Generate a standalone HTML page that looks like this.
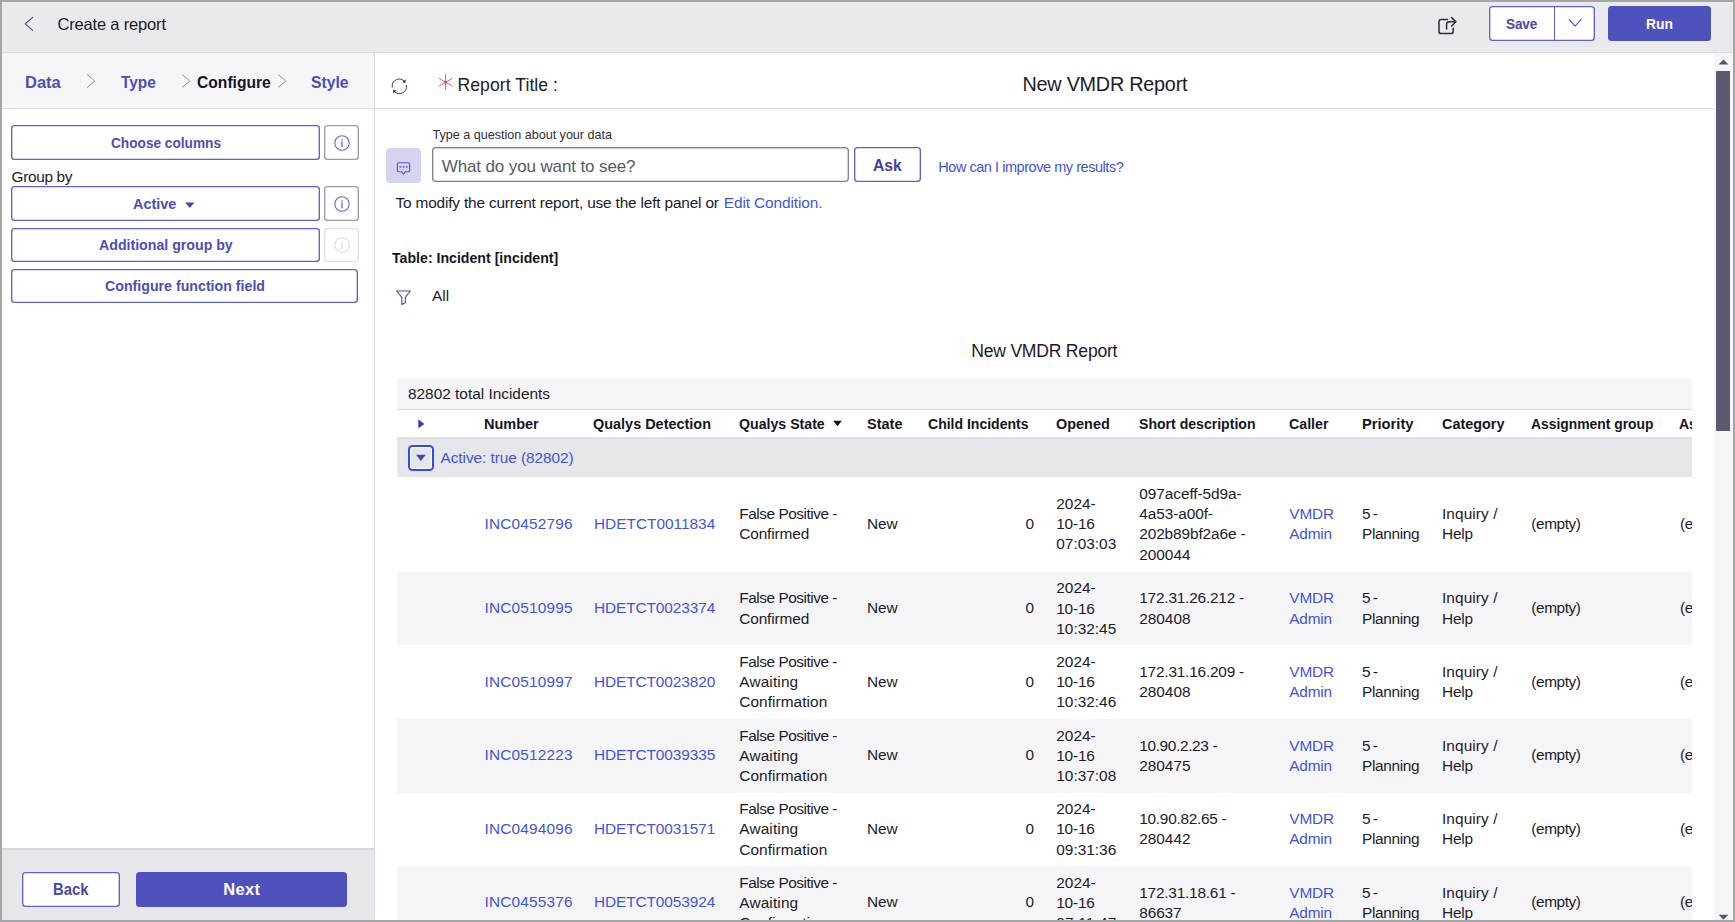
<!DOCTYPE html>
<html lang="en">
<head>
<meta charset="utf-8">
<title>Create a report</title>
<style>
*,*::before,*::after{box-sizing:border-box}
*{margin:0;padding:0}
html,body{width:1735px;height:922px;overflow:hidden;background:#fff}
body{font-family:"Liberation Sans",sans-serif;font-size:15.4px;color:#1b1b29}
#frame{position:absolute;left:0;top:0;width:1735px;height:922px;overflow:hidden;background:#fff}
#frame::after{content:"";position:absolute;left:0;top:0;width:1735px;height:922px;border:2px solid #a6a6a6;z-index:50}
header#top,aside#left,main#main,nav#tabs,footer#lfoot{position:absolute;left:0;top:0;width:1735px;height:922px}
header#top,aside#left,nav#tabs,footer#lfoot{pointer-events:none}
header#top::before{content:"";position:absolute;left:0;top:0;width:1735px;height:53px;background:#e9eaee;border-bottom:1px solid #d9dbe1}
aside#left::before{content:"";position:absolute;left:0;top:53px;width:374px;height:56px;background:#f6f6f8;border-bottom:1px solid #dddde2}
aside#left::after{content:"";position:absolute;left:374px;top:53px;width:1px;height:869px;background:#d9d9de}
footer#lfoot::before{content:"";position:absolute;left:0;top:848px;width:374px;height:74px;background:#e6e7eb;border-top:2px solid #d6d8df}
.t{position:absolute;white-space:pre;font-weight:400;font-style:normal;text-decoration:none;display:block}
.ic{position:absolute;display:block;overflow:visible}
.btn{position:absolute;border-radius:3.5px}
.btn.sec{background:#fff;box-shadow:inset 0 0 0 1.35px #5f62c6}
.btn.pri{background:#4f52bd}
#titlebar{position:absolute;left:375px;top:108px;width:1338.5px;height:1px;background:#dcdde2}
#qinput{position:absolute;left:432px;top:147.4px;width:416.8px;height:34.6px;border-radius:4px;background:#fff;box-shadow:inset 0 0 0 1.35px #7d8290,inset 0 2.5px 1.5px rgba(0,0,0,.07)}
#tbl{position:absolute;top:377.5px;height:545px;overflow:hidden}
.hd{border-top:1px solid #dcdde2;border-bottom:2px solid #dcdee3;overflow:hidden}
.vr{position:absolute;width:1px;background:#5d60c6;display:block}
.lk{color:#3f55dc;text-decoration:none}
.c.s1{top:-0.7px}
.row{position:absolute;left:0;width:100%}
.dr{overflow:hidden}
.c{position:absolute;top:0;height:100%;display:flex;flex-direction:column;justify-content:center;line-height:20.2px;white-space:pre;font-size:15.4px}
#sb{position:absolute;left:1714px;top:53px;width:19px;height:869px;background:#f5f5f7}
#thumb{position:absolute;left:1.9px;top:18.2px;width:14px;height:360px;background:#5c5a6e}

</style>
</head>
<body>
<div id="frame">
<header id="top">
<svg class="ic" style="left:22.00px;top:15.00px" width="14" height="18" viewBox="0 0 14 18"><path d="M10.6 2.4 L3.2 8.9 L10.6 15.4" fill="none" stroke="#47436e" stroke-width="1.05" stroke-linecap="round" stroke-linejoin="round"/></svg>
<h1 class="t" style="left:57.50px;top:13.78px;font-size:16.5px;line-height:20px;color:#1b1b29;letter-spacing:-0.177px;">Create a report</h1>
<svg class="ic" style="left:1436.00px;top:14.00px" width="24" height="24" viewBox="0 0 24 24"><g fill="none" stroke="#2b2d3a" stroke-width="1.5" stroke-linecap="round" stroke-linejoin="round"><path d="M11.5 5.4 H5.2 Q3.0 5.4 3.0 7.6 V17.4 Q3.0 19.6 5.2 19.6 H15.0 Q17.2 19.6 17.2 17.4 V14.2"/><path d="M10.6 15.0 V10.4 Q10.6 7.8 13.2 7.8 H19.6"/><path d="M15.6 3.6 L19.9 7.8 L15.6 12.0"/></g></svg>
<div role="button" class="btn sec" style="left:1488.6px;top:6.3px;width:106.3px;height:34.5px;"><b class="t" style="left:17.90px;top:7.56px;font-size:15.4px;line-height:20px;color:#4548a8;font-weight:700;transform:scaleX(0.8800);transform-origin:0 50%;letter-spacing:-0.166px;">Save</b><i class="vr" style="left:65.4px;top:0.7px;height:33px"></i><svg class="ic" style="left:77.40px;top:9.70px" width="18" height="14" viewBox="0 0 18 14"><path d="M3.2 3.6 L9.1 10.2 L15.0 3.6" fill="none" stroke="#4f52bd" stroke-width="1.1" stroke-linecap="round" stroke-linejoin="round"/></svg></div>
<div role="button" class="btn pri" style="left:1608.1px;top:6.3px;width:103.2px;height:34.5px;"><b class="t" style="left:38.30px;top:7.56px;font-size:15.4px;line-height:20px;color:#fff;font-weight:700;transform:scaleX(0.9023);transform-origin:0 50%;">Run</b></div>
</header>
<aside id="left">
<nav id="tabs">
<a class="t" style="left:25.00px;top:71.58px;font-size:16.5px;line-height:20px;color:#4b4eb8;font-weight:700;letter-spacing:-0.005px;">Data</a>
<svg class="ic" style="left:84.60px;top:72.00px" width="12" height="18" viewBox="0 0 12 18"><path d="M2.3 2.6 L9.8 9.0 L2.3 15.4" fill="none" stroke="#8f95ad" stroke-width="1.0" stroke-linecap="round" stroke-linejoin="round"/></svg>
<a class="t" style="left:121.40px;top:71.58px;font-size:16.5px;line-height:20px;color:#4b4eb8;font-weight:700;transform:scaleX(0.9304);transform-origin:0 50%;">Type</a>
<svg class="ic" style="left:180.40px;top:72.00px" width="12" height="18" viewBox="0 0 12 18"><path d="M2.3 2.6 L9.8 9.0 L2.3 15.4" fill="none" stroke="#8f95ad" stroke-width="1.0" stroke-linecap="round" stroke-linejoin="round"/></svg>
<a class="t" style="left:197.30px;top:71.58px;font-size:16.5px;line-height:20px;color:#15151f;font-weight:700;transform:scaleX(0.9471);transform-origin:0 50%;">Configure</a>
<svg class="ic" style="left:276.10px;top:72.00px" width="12" height="18" viewBox="0 0 12 18"><path d="M2.3 2.6 L9.8 9.0 L2.3 15.4" fill="none" stroke="#8f95ad" stroke-width="1.0" stroke-linecap="round" stroke-linejoin="round"/></svg>
<a class="t" style="left:310.75px;top:71.58px;font-size:16.5px;line-height:20px;color:#4b4eb8;font-weight:700;transform:scaleX(0.9509);transform-origin:0 50%;">Style</a>
</nav>
<div role="button" class="btn sec" style="left:11px;top:125.4px;width:308.7px;height:34.6px;"><b class="t" style="left:99.50px;top:7.86px;font-size:15.4px;line-height:20px;color:#4b4eb8;font-weight:700;transform:scaleX(0.8871);transform-origin:0 50%;">Choose columns</b></div>
<div role="button" aria-label="More information" class="btn " style="left:324.1px;top:125.4px;width:34.9px;height:34.7px;box-shadow:inset 0 0 0 1.35px #989dab;background:#fff"><svg class="ic" style="left:8.50px;top:8.40px" width="18" height="18" viewBox="0 0 18 18"><circle cx="9" cy="9" r="7.2" fill="none" stroke="#6760c8" stroke-width="1.1"/><rect x="8.35" y="7.6" width="1.3" height="5.6" fill="#6760c8"/><rect x="8.3" y="5.2" width="1.4" height="1.4" fill="#6760c8"/></svg></div>
<label class="t" style="left:11.50px;top:166.66px;font-size:15.4px;line-height:20px;color:#1b1b29;letter-spacing:-0.33px;">Group by</label>
<div role="button" class="btn sec" style="left:11px;top:186.2px;width:308.7px;height:34.6px;"><b class="t" style="left:122.25px;top:7.86px;font-size:15.4px;line-height:20px;color:#4b4eb8;font-weight:700;transform:scaleX(0.9361);transform-origin:0 50%;">Active</b><svg class="ic" style="left:173.00px;top:14.80px" width="12" height="9" viewBox="0 0 12 9"><path d="M1.1 1.6 H10.5 L5.8 7.1 Z" fill="#4548b8"/></svg></div>
<div role="button" aria-label="More information" class="btn " style="left:324.1px;top:186.2px;width:34.9px;height:34.7px;box-shadow:inset 0 0 0 1.35px #989dab;background:#fff"><svg class="ic" style="left:8.50px;top:8.40px" width="18" height="18" viewBox="0 0 18 18"><circle cx="9" cy="9" r="7.2" fill="none" stroke="#6760c8" stroke-width="1.1"/><rect x="8.35" y="7.6" width="1.3" height="5.6" fill="#6760c8"/><rect x="8.3" y="5.2" width="1.4" height="1.4" fill="#6760c8"/></svg></div>
<div role="button" class="btn sec" style="left:11px;top:227.5px;width:308.7px;height:34.6px;"><b class="t" style="left:87.75px;top:7.76px;font-size:15.4px;line-height:20px;color:#4b4eb8;font-weight:700;transform:scaleX(0.9202);transform-origin:0 50%;">Additional group by</b></div>
<div role="button" aria-label="More information" class="btn " style="left:324.1px;top:227.5px;width:34.9px;height:34.7px;box-shadow:inset 0 0 0 1.35px #dfe0e8;background:#fff"><svg class="ic" style="left:8.50px;top:8.40px" width="18" height="18" viewBox="0 0 18 18"><circle cx="9" cy="9" r="7.2" fill="none" stroke="#d9d8f2" stroke-width="1.1"/><rect x="8.35" y="7.6" width="1.3" height="5.6" fill="#d9d8f2"/><rect x="8.3" y="5.2" width="1.4" height="1.4" fill="#d9d8f2"/></svg></div>
<div role="button" class="btn sec" style="left:11px;top:268.7px;width:346.8px;height:34.6px;"><b class="t" style="left:93.50px;top:7.76px;font-size:15.4px;line-height:20px;color:#4b4eb8;font-weight:700;transform:scaleX(0.9219);transform-origin:0 50%;">Configure function field</b></div>
<footer id="lfoot">
<div role="button" class="btn sec" style="left:22px;top:872px;width:98px;height:35px;"><b class="t" style="left:31.25px;top:7.28px;font-size:16.5px;line-height:20px;color:#4548a8;font-weight:700;transform:scaleX(0.8998);transform-origin:0 50%;">Back</b></div>
<div role="button" class="btn pri" style="left:136.25px;top:872px;width:210.5px;height:35px;"><b class="t" style="left:87.00px;top:7.28px;font-size:16.5px;line-height:20px;color:#fff;font-weight:700;letter-spacing:0.328px;">Next</b></div>
</footer>
</aside>
<main id="main">
<div id="titlebar"></div>
<svg class="ic" style="left:389.00px;top:76.00px" width="21" height="21" viewBox="0 0 21 21"><g fill="none" stroke="#3d3990" stroke-width="1.0" stroke-linecap="round"><path d="M3.2 11.2 A7.1 7.1 0 0 1 15.4 5.3"/><path d="M17.5 9.5 A7.1 7.1 0 0 1 5.3 15.4"/></g><path d="M16.6 3.3 L16.5 6.9 L13.2 6.2 Z" fill="#2c2876"/><path d="M4.1 17.4 L4.2 13.8 L7.5 14.5 Z" fill="#2c2876"/></svg>
<svg class="ic" style="left:436.00px;top:72.00px" width="20" height="20" viewBox="0 0 20 20"><g stroke="#ef4a66" stroke-width="0.95" stroke-linecap="round"><path d="M9.6 2.7 V17.8"/><path d="M3.0 6.4 L16.3 14.1"/><path d="M16.3 6.4 L3.0 14.1"/></g><circle cx="9.6" cy="10.2" r="1.1" fill="#e5203f"/></svg>
<label class="t" style="left:457.50px;top:74.65px;font-size:17.6px;line-height:20px;color:#1b1b29;letter-spacing:0.058px;">Report Title :</label>
<h2 class="t" style="left:1022.50px;top:73.89px;font-size:19.8px;line-height:20px;color:#1b1b29;letter-spacing:-0.228px;">New VMDR Report</h2>
<label class="t" style="left:432.50px;top:124.83px;font-size:12.6px;line-height:20px;color:#2e2e3a;letter-spacing:-0.015px;">Type a question about your data</label>
<div role="button" aria-label="Ask a question" class="btn " style="left:386.2px;top:148.1px;width:34.5px;height:34.8px;background:#d4d4ee;border-radius:4px"><svg class="ic" style="left:7.80px;top:10.90px" width="19" height="19" viewBox="0 0 19 19"><path d="M4.7 3.7 H14.3 Q15.6 3.7 15.6 5.0 V11.4 Q15.6 12.7 14.3 12.7 H11.3 L9.5 15.1 L7.7 12.7 H4.7 Q3.4 12.7 3.4 11.4 V5.0 Q3.4 3.7 4.7 3.7 Z" fill="none" stroke="#5a55c6" stroke-width="1.15" stroke-linejoin="round"/><g fill="#5a55c6"><rect x="5.5" y="7.1" width="1.6" height="1.6"/><rect x="8.7" y="7.1" width="1.6" height="1.6"/><rect x="11.9" y="7.1" width="1.6" height="1.6"/></g></svg></div>
<div id="qinput"><span class="t" style="left:9.75px;top:9.71px;font-size:17px;line-height:20px;color:#565a66;letter-spacing:-0.122px;">What do you want to see?</span></div>
<div role="button" class="btn sec" style="left:854.2px;top:147px;width:66.6px;height:34.8px;"><b class="t" style="left:18.80px;top:9.31px;font-size:17px;line-height:20px;color:#3f4296;font-weight:700;transform:scaleX(0.9218);transform-origin:0 50%;">Ask</b></div>
<a class="t" style="left:938.25px;top:157.38px;font-size:14.5px;line-height:20px;color:#3f55dc;letter-spacing:-0.455px;">How can I improve my results?</a>
<span class="t" style="left:395.50px;top:192.91px;font-size:15.4px;line-height:20px;color:#1b1b29;letter-spacing:-0.169px;">To modify the current report, use the left panel or</span>
<a class="t" style="left:723.75px;top:192.91px;font-size:15.4px;line-height:20px;color:#3f55dc;letter-spacing:-0.097px;">Edit Condition.</a>
<b class="t" style="left:392.00px;top:247.91px;font-size:15.4px;line-height:20px;color:#15151f;font-weight:700;transform:scaleX(0.9186);transform-origin:0 50%;">Table: Incident [incident]</b>
<svg class="ic" style="left:394.00px;top:288.00px" width="20" height="19" viewBox="0 0 20 19"><path d="M2.6 3.0 H16.3 L11.4 9.3 V14.7 L7.8 16.4 V9.3 Z" fill="none" stroke="#54499f" stroke-width="1.1" stroke-linejoin="round"/></svg>
<span class="t" style="left:432.10px;top:285.96px;font-size:15.4px;line-height:20px;color:#1b1b29;">All</span>
<h3 class="t" style="left:971.25px;top:340.90px;font-size:17.6px;line-height:20px;color:#1b1b29;letter-spacing:-0.239px;">New VMDR Report</h3>
<section id="tbl" style="left:397px;width:1294.6px">
<div class="row" style="top:0;height:31.2px;background:#f5f5f7"><span class="t" style="left:11.00px;top:6.16px;font-size:15.4px;line-height:20px;color:#1b1b29;letter-spacing:-0.002px;">82802 total Incidents</span></div>
<div class="row hd" style="top:31.2px;height:30.1px">
<svg class="ic" style="left:19.00px;top:7.30px" width="10" height="13" viewBox="0 0 10 13"><path d="M2.3 2.3 L8.4 6.9 L2.3 11.5 Z" fill="#3b3fb4"/></svg>
<b class="t" style="left:87.25px;top:4.16px;font-size:15.4px;line-height:20px;color:#15151f;font-weight:700;transform:scaleX(0.9414);transform-origin:0 50%;">Number</b>
<b class="t" style="left:196.25px;top:4.16px;font-size:15.4px;line-height:20px;color:#15151f;font-weight:700;transform:scaleX(0.9385);transform-origin:0 50%;">Qualys Detection</b>
<b class="t" style="left:342.25px;top:4.16px;font-size:15.4px;line-height:20px;color:#15151f;font-weight:700;transform:scaleX(0.9196);transform-origin:0 50%;">Qualys State</b>
<svg class="ic" style="left:435.00px;top:9.30px" width="11" height="9" viewBox="0 0 11 9"><path d="M1.2 1.7 H9.8 L5.5 7.3 Z" fill="#15151f"/></svg>
<b class="t" style="left:470.00px;top:4.16px;font-size:15.4px;line-height:20px;color:#15151f;font-weight:700;transform:scaleX(0.9431);transform-origin:0 50%;">State</b>
<b class="t" style="left:531.25px;top:4.16px;font-size:15.4px;line-height:20px;color:#15151f;font-weight:700;transform:scaleX(0.9110);transform-origin:0 50%;">Child Incidents</b>
<b class="t" style="left:659.25px;top:4.16px;font-size:15.4px;line-height:20px;color:#15151f;font-weight:700;transform:scaleX(0.9381);transform-origin:0 50%;">Opened</b>
<b class="t" style="left:742.25px;top:4.16px;font-size:15.4px;line-height:20px;color:#15151f;font-weight:700;transform:scaleX(0.9143);transform-origin:0 50%;">Short description</b>
<b class="t" style="left:892.25px;top:4.16px;font-size:15.4px;line-height:20px;color:#15151f;font-weight:700;transform:scaleX(0.9233);transform-origin:0 50%;">Caller</b>
<b class="t" style="left:964.75px;top:4.16px;font-size:15.4px;line-height:20px;color:#15151f;font-weight:700;transform:scaleX(0.9556);transform-origin:0 50%;">Priority</b>
<b class="t" style="left:1045.00px;top:4.16px;font-size:15.4px;line-height:20px;color:#15151f;font-weight:700;transform:scaleX(0.9368);transform-origin:0 50%;">Category</b>
<b class="t" style="left:1134.25px;top:4.16px;font-size:15.4px;line-height:20px;color:#15151f;font-weight:700;transform:scaleX(0.9009);transform-origin:0 50%;">Assignment group</b>
<b class="t" style="left:1282.30px;top:4.16px;font-size:15.4px;line-height:20px;color:#15151f;font-weight:700;transform:scaleX(0.9083);transform-origin:0 50%;">Assigned to</b>
</div>
<div class="row" style="top:61.3px;height:38px;background:#e5e6ea">
<div role="button" aria-label="Collapse group" class="btn " style="left:11px;top:6.099999999999966px;width:26px;height:26px;box-shadow:inset 0 0 0 2px #334be6,inset 0 0 0 3px #fbfbfd;border-radius:4.5px;background:#e5e6ea"><svg class="ic" style="left:7.00px;top:8.50px" width="12" height="9" viewBox="0 0 12 9"><path d="M1.0 1.7 H10.8 L5.9 8.1 Z" fill="#4644bc"/></svg></div>
<a class="t" style="left:43.50px;top:8.86px;font-size:15.4px;line-height:20px;color:#3f55dc;letter-spacing:-0.056px;">Active: true (82802)</a>
</div>
<div class="row dr" style="top:99.3px;height:95px">
<a class="c lk s1" style="left:87.5px"><div style="letter-spacing:0.174px">INC0452796</div></a>
<a class="c lk s1" style="left:197px"><div style="letter-spacing:0.005px">HDETCT0011834</div></a>
<div class="c" style="left:342.25px"><div style="letter-spacing:-0.464px">False Positive -</div><div style="letter-spacing:-0.125px">Confirmed</div></div>
<div class="c s1" style="left:470px"><div style="letter-spacing:-0.148px">New</div></div>
<div class="c s1" style="left:628.4px"><div>0</div></div>
<div class="c" style="left:659.25px"><div style="letter-spacing:0.031px">2024-</div><div style="letter-spacing:-0.194px">10-16</div><div style="letter-spacing:0.011px">07:03:03</div></div>
<div class="c" style="left:742.25px"><div style="letter-spacing:-0.059px">097aceff-5d9a-</div><div style="letter-spacing:-0.078px">4a53-a00f-</div><div style="letter-spacing:-0.103px">202b89bf2a6e -</div><div style="letter-spacing:-0.022px">200044</div></div>
<a class="c lk" style="left:892.25px"><div style="letter-spacing:-0.109px">VMDR</div><div style="letter-spacing:-0.219px">Admin</div></a>
<div class="c" style="left:965px"><div style="letter-spacing:-0.984px">5 -</div><div style="letter-spacing:-0.344px">Planning</div></div>
<div class="c" style="left:1045px"><div style="letter-spacing:0.094px">Inquiry /</div><div style="letter-spacing:-0.219px">Help</div></div>
<div class="c s1" style="left:1134.25px"><div style="letter-spacing:-0.404px">(empty)</div></div>
<div class="c s1" style="left:1283px"><div style="letter-spacing:-0.404px">(empty)</div></div>
</div>
<div class="row dr" style="top:194.3px;height:73.7px;background:#f5f5f7">
<a class="c lk s1" style="left:87.5px"><div style="letter-spacing:0.174px">INC0510995</div></a>
<a class="c lk s1" style="left:197px"><div style="letter-spacing:-0.091px">HDETCT0023374</div></a>
<div class="c" style="left:342.25px"><div style="letter-spacing:-0.464px">False Positive -</div><div style="letter-spacing:-0.125px">Confirmed</div></div>
<div class="c s1" style="left:470px"><div style="letter-spacing:-0.148px">New</div></div>
<div class="c s1" style="left:628.4px"><div>0</div></div>
<div class="c" style="left:659.25px"><div style="letter-spacing:0.031px">2024-</div><div style="letter-spacing:-0.194px">10-16</div><div style="letter-spacing:0.011px">10:32:45</div></div>
<div class="c" style="left:742.25px"><div style="letter-spacing:-0.202px">172.31.26.212 -</div><div style="letter-spacing:-0.022px">280408</div></div>
<a class="c lk" style="left:892.25px"><div style="letter-spacing:-0.109px">VMDR</div><div style="letter-spacing:-0.219px">Admin</div></a>
<div class="c" style="left:965px"><div style="letter-spacing:-0.984px">5 -</div><div style="letter-spacing:-0.344px">Planning</div></div>
<div class="c" style="left:1045px"><div style="letter-spacing:0.094px">Inquiry /</div><div style="letter-spacing:-0.219px">Help</div></div>
<div class="c s1" style="left:1134.25px"><div style="letter-spacing:-0.404px">(empty)</div></div>
<div class="c s1" style="left:1283px"><div style="letter-spacing:-0.404px">(empty)</div></div>
</div>
<div class="row dr" style="top:268.0px;height:73.6px">
<a class="c lk s1" style="left:87.5px"><div style="letter-spacing:0.174px">INC0510997</div></a>
<a class="c lk s1" style="left:197px"><div style="letter-spacing:-0.091px">HDETCT0023820</div></a>
<div class="c" style="left:342.25px"><div style="letter-spacing:-0.464px">False Positive -</div><div style="letter-spacing:0.142px">Awaiting</div><div style="letter-spacing:0.068px">Confirmation</div></div>
<div class="c s1" style="left:470px"><div style="letter-spacing:-0.148px">New</div></div>
<div class="c s1" style="left:628.4px"><div>0</div></div>
<div class="c" style="left:659.25px"><div style="letter-spacing:0.031px">2024-</div><div style="letter-spacing:-0.194px">10-16</div><div style="letter-spacing:0.011px">10:32:46</div></div>
<div class="c" style="left:742.25px"><div style="letter-spacing:-0.202px">172.31.16.209 -</div><div style="letter-spacing:-0.022px">280408</div></div>
<a class="c lk" style="left:892.25px"><div style="letter-spacing:-0.109px">VMDR</div><div style="letter-spacing:-0.219px">Admin</div></a>
<div class="c" style="left:965px"><div style="letter-spacing:-0.984px">5 -</div><div style="letter-spacing:-0.344px">Planning</div></div>
<div class="c" style="left:1045px"><div style="letter-spacing:0.094px">Inquiry /</div><div style="letter-spacing:-0.219px">Help</div></div>
<div class="c s1" style="left:1134.25px"><div style="letter-spacing:-0.404px">(empty)</div></div>
<div class="c s1" style="left:1283px"><div style="letter-spacing:-0.404px">(empty)</div></div>
</div>
<div class="row dr" style="top:341.6px;height:73.6px;background:#f5f5f7">
<a class="c lk s1" style="left:87.5px"><div style="letter-spacing:0.174px">INC0512223</div></a>
<a class="c lk s1" style="left:197px"><div style="letter-spacing:-0.091px">HDETCT0039335</div></a>
<div class="c" style="left:342.25px"><div style="letter-spacing:-0.464px">False Positive -</div><div style="letter-spacing:0.142px">Awaiting</div><div style="letter-spacing:0.068px">Confirmation</div></div>
<div class="c s1" style="left:470px"><div style="letter-spacing:-0.148px">New</div></div>
<div class="c s1" style="left:628.4px"><div>0</div></div>
<div class="c" style="left:659.25px"><div style="letter-spacing:0.031px">2024-</div><div style="letter-spacing:-0.194px">10-16</div><div style="letter-spacing:0.011px">10:37:08</div></div>
<div class="c" style="left:742.25px"><div style="letter-spacing:-0.351px">10.90.2.23 -</div><div style="letter-spacing:-0.022px">280475</div></div>
<a class="c lk" style="left:892.25px"><div style="letter-spacing:-0.109px">VMDR</div><div style="letter-spacing:-0.219px">Admin</div></a>
<div class="c" style="left:965px"><div style="letter-spacing:-0.984px">5 -</div><div style="letter-spacing:-0.344px">Planning</div></div>
<div class="c" style="left:1045px"><div style="letter-spacing:0.094px">Inquiry /</div><div style="letter-spacing:-0.219px">Help</div></div>
<div class="c s1" style="left:1134.25px"><div style="letter-spacing:-0.404px">(empty)</div></div>
<div class="c s1" style="left:1283px"><div style="letter-spacing:-0.404px">(empty)</div></div>
</div>
<div class="row dr" style="top:415.2px;height:73.6px">
<a class="c lk s1" style="left:87.5px"><div style="letter-spacing:0.174px">INC0494096</div></a>
<a class="c lk s1" style="left:197px"><div style="letter-spacing:-0.091px">HDETCT0031571</div></a>
<div class="c" style="left:342.25px"><div style="letter-spacing:-0.464px">False Positive -</div><div style="letter-spacing:0.142px">Awaiting</div><div style="letter-spacing:0.068px">Confirmation</div></div>
<div class="c s1" style="left:470px"><div style="letter-spacing:-0.148px">New</div></div>
<div class="c s1" style="left:628.4px"><div>0</div></div>
<div class="c" style="left:659.25px"><div style="letter-spacing:0.031px">2024-</div><div style="letter-spacing:-0.194px">10-16</div><div style="letter-spacing:0.011px">09:31:36</div></div>
<div class="c" style="left:742.25px"><div style="letter-spacing:-0.268px">10.90.82.65 -</div><div style="letter-spacing:-0.022px">280442</div></div>
<a class="c lk" style="left:892.25px"><div style="letter-spacing:-0.109px">VMDR</div><div style="letter-spacing:-0.219px">Admin</div></a>
<div class="c" style="left:965px"><div style="letter-spacing:-0.984px">5 -</div><div style="letter-spacing:-0.344px">Planning</div></div>
<div class="c" style="left:1045px"><div style="letter-spacing:0.094px">Inquiry /</div><div style="letter-spacing:-0.219px">Help</div></div>
<div class="c s1" style="left:1134.25px"><div style="letter-spacing:-0.404px">(empty)</div></div>
<div class="c s1" style="left:1283px"><div style="letter-spacing:-0.404px">(empty)</div></div>
</div>
<div class="row dr" style="top:488.8px;height:73.6px;background:#f5f5f7">
<a class="c lk s1" style="left:87.5px"><div style="letter-spacing:0.174px">INC0455376</div></a>
<a class="c lk s1" style="left:197px"><div style="letter-spacing:-0.091px">HDETCT0053924</div></a>
<div class="c" style="left:342.25px"><div style="letter-spacing:-0.464px">False Positive -</div><div style="letter-spacing:0.142px">Awaiting</div><div style="letter-spacing:0.068px">Confirmation</div></div>
<div class="c s1" style="left:470px"><div style="letter-spacing:-0.148px">New</div></div>
<div class="c s1" style="left:628.4px"><div>0</div></div>
<div class="c" style="left:659.25px"><div style="letter-spacing:0.031px">2024-</div><div style="letter-spacing:-0.194px">10-16</div><div style="letter-spacing:0.174px">07:11:47</div></div>
<div class="c" style="left:742.25px"><div style="letter-spacing:-0.22px">172.31.18.61 -</div><div style="letter-spacing:-0.103px">86637</div></div>
<a class="c lk" style="left:892.25px"><div style="letter-spacing:-0.109px">VMDR</div><div style="letter-spacing:-0.219px">Admin</div></a>
<div class="c" style="left:965px"><div style="letter-spacing:-0.984px">5 -</div><div style="letter-spacing:-0.344px">Planning</div></div>
<div class="c" style="left:1045px"><div style="letter-spacing:0.094px">Inquiry /</div><div style="letter-spacing:-0.219px">Help</div></div>
<div class="c s1" style="left:1134.25px"><div style="letter-spacing:-0.404px">(empty)</div></div>
<div class="c s1" style="left:1283px"><div style="letter-spacing:-0.404px">(empty)</div></div>
</div>
</section>
</main>
<div id="sb"><svg class="ic" style="left:3.00px;top:5.00px" width="13" height="8" viewBox="0 0 13 8"><path d="M1.6 6.6 L6.5 1.6 L11.4 6.6 Z" fill="#55536a"/></svg><div id="thumb"></div><svg class="ic" style="left:3.00px;top:860.00px" width="13" height="8" viewBox="0 0 13 8"><path d="M1.6 1.8 L6.5 6.8 L11.4 1.8 Z" fill="#55536a"/></svg></div>
</div>
</body>
</html>
